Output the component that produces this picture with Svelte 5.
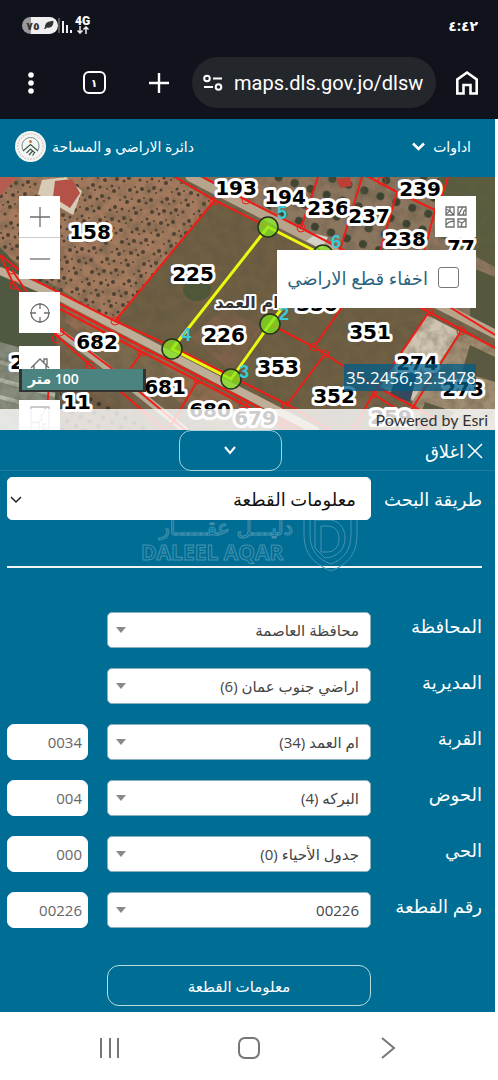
<script>
  let metodo = $state('parcel');
  let hideParcels = $state(false);

  const fields = [
    { id: 'governorate', label: 'المحافظة', value: 'محافظة العاصمة', code: null },
    { id: 'directorate', label: 'المديرية', value: 'اراضي جنوب عمان (6)', code: null },
    { id: 'village', label: 'القربة', value: 'ام العمد (34)', code: '0034' },
    { id: 'basin', label: 'الحوض', value: 'البركه (4)', code: '004' },
    { id: 'quarter', label: 'الحي', value: 'جدول الأحياء (0)', code: '000' },
    { id: 'parcel', label: 'رقم القطعة', value: '00226', code: '00226' }
  ];

  const parcels = [
    ['158', 90, 55], ['193', 236, 11], ['194', 285, 20], ['236', 328, 31],
    ['237', 369, 39], ['239', 420, 12], ['238', 405, 62], ['77', 461, 70],
    ['225', 193, 97], ['226', 224, 158], ['682', 97, 165], ['681', 165, 210],
    ['680', 210, 233], ['679', 255, 241], ['353', 278, 190], ['352', 334, 219],
    ['350', 317, 127], ['351', 370, 155], ['274', 417, 186], ['273', 463, 212],
    ['259', 391, 240], ['11', 77, 225], ['2', 17, 185]
  ];

  const corners = [[268, 50], [323, 78], [270, 147], [231, 202], [172, 172]];
  const cornerLabels = [['5', 282, 36], ['6', 336, 65], ['2', 284, 137], ['3', 244, 195], ['4', 186, 158]];

  const knots = [[214, 24], [115, 144], [12, 93], [14, 108], [56, 162], [90, 188], [142, 175], [198, 203], [301, 51],
    [314, 170], [325, 177], [286, 229], [429, 135], [461, 154], [373, 217], [382, 4], [246, 23], [60, 155], [243, 227]];

  // olive rows, slightly uneven so they don't read as a grid
  const trees = [];
  for (let r = 0; r < 28; r++) {
    for (let c = 0; c < 36; c++) {
      const x = -80 + c * 8 + r * 3 + ((r * 7 + c * 3) % 4);
      const y = r * 8 - 100 + c * 3 + ((r * 5 + c * 11) % 4);
      if (x > 0 && x < 214 && y > 0 && y < 146) {
        trees.push([x, y, 1 + ((r + c * 2) % 3) * 0.5]);
      }
    }
  }
</script>

<div class="phone">
  <div class="status">
    <div class="status-left">
      <span class="battery">٧٥
        <svg width="10" height="8" viewBox="0 0 10 8"><path d="M1 6C1 2 4 0 9.500 0 9.500 5 7 7.500 3 6.500L1 8H0Z" fill="#333" /></svg>
      </span>
      <svg width="17" height="17" viewBox="0 0 17 17" stroke="#eee" stroke-width="2">
        <path d="M1 1V16" stroke="#555" /><path d="M5 4V16M9 8V16M13 13V16" />
      </svg>
      <span class="net"><b>4G</b>
        <svg width="12" height="8" viewBox="0 0 12 8" fill="none" stroke="#eee" stroke-width="1.500"><path d="M3 0V7M0.500 4.500L3 7L5.500 4.500M9 8V1M6.500 3.500L9 1L11.500 3.500" /></svg>
      </span>
    </div>
    <time>٤:٤٢</time>
  </div>

  <div class="browser">
    <button aria-label="menu">
      <svg width="6" height="22" viewBox="0 0 6 22" fill="#fff"><circle cx="3" cy="3" r="2.800" /><circle cx="3" cy="11" r="2.800" /><circle cx="3" cy="19" r="2.800" /></svg>
    </button>
    <button aria-label="tabs"><span class="tab">١</span></button>
    <button aria-label="new tab">
      <svg width="22" height="22" viewBox="0 0 22 22" stroke="#fff" stroke-width="2.400"><path d="M11 1V21M1 11H21" /></svg>
    </button>
    <div class="url">
      <svg width="20" height="18" viewBox="0 0 20 18" fill="none" stroke="#fff" stroke-width="2"><circle cx="4" cy="4.500" r="2.800" /><path d="M10 4.500H19M1 13H10" /><circle cx="15.500" cy="13" r="2.800" /></svg>
      <span>maps.dls.gov.jo/dlsw</span>
    </div>
    <button aria-label="home">
      <svg width="24" height="26" viewBox="0 0 24 26" fill="none" stroke="#fff" stroke-width="2.600"><path d="M2.300 23.500V9.500L12 2.500L21.700 9.500V23.500H15.500V15H8.500V23.500Z" /></svg>
    </button>
  </div>

  <main class="site" dir="rtl">
    <header>
      <button class="tools">اداوات
        <svg width="13" height="9" viewBox="0 0 13 9" fill="none" stroke="#fff" stroke-width="2.600"><path d="M1 1.500L6.500 7L12 1.500" /></svg>
      </button>
      <div class="brand">
        <span>دائرة الاراضي و المساحة</span>
        <svg width="31" height="31" viewBox="0 0 31 31" fill="none">
          <circle cx="15.500" cy="15.500" r="15.500" fill="#f5f5f3" />
          <circle cx="15.500" cy="15.500" r="12.700" stroke="#d5d2c9" stroke-width="1.500" stroke-dasharray="2 1" />
          <path d="M8 19A8.500 8.500 0 1 1 23 19" stroke="#6f8c82" stroke-width="1" />
          <path d="M8 20L15.500 13.500L23 20M11.500 22L15.500 18L20 22M14 24L18 19.500M17.500 24.500L20 21" stroke="#39584d" stroke-width="1.200" />
          <circle cx="15.500" cy="10.500" r="1.500" fill="#c77a3b" />
        </svg>
      </div>
    </header>

    <section class="map" dir="ltr">
      <svg class="ground" viewBox="0 0 495 253" preserveAspectRatio="xMinYMin slice">
        <defs>
          <filter id="grain" x="0" y="0" width="100%" height="100%">
            <feTurbulence type="fractalNoise" baseFrequency="0.09" numOctaves="4" seed="8" />
            <feColorMatrix values="0 0 0 0 0.100  0 0 0 0 0.090  0 0 0 0 0.050  2.400 0 0 0 -0.900" />
          </filter>
          <clipPath id="orchard"><path d="M0 0H172L214 24L115 146L60 120L0 75Z" /></clipPath>
          <pattern id="rows" width="10" height="10" patternUnits="userSpaceOnUse" patternTransform="rotate(28)">
            <circle cx="4" cy="4" r="2.300" fill="#2e3323" />
          </pattern>
          <pattern id="bush" width="17" height="17" patternUnits="userSpaceOnUse" patternTransform="rotate(20)">
            <circle cx="7" cy="7" r="4" fill="#3a4330" />
          </pattern>
        </defs>
        <rect width="495" height="253" fill="#75634a" />
        <path d="M0 0H172L214 24L115 146L0 75Z" fill="#a47a5e" />
        <g clip-path="url(#orchard)" fill="#4b4032">
          {#each trees as [x, y, r]}
            <circle cx={x} cy={y} {r} />
          {/each}
        </g>
        <path d="M214 24L345 90L480 160L300 253L250 222L115 146Z" fill="#6f5f43" />
        <path d="M190 160L225 130L262 150L232 195Z" fill="#7d6149" />
        <path d="M203 0H495V160L300 55Z" fill="#8d7660" />
        <path d="M265 0H440L425 80L350 75L265 30Z" fill="url(#bush)" />
        <path d="M440 0H495V90L440 60Z" fill="#5c5e40" />
        <path d="M427 138L460 155L415 225L380 210Z" fill="#cfc4b1" />
        <path d="M460 155L495 170V253H400L415 220Z" fill="#a18d72" />
        <path d="M470 168L495 180V205L462 195ZM425 225L455 235L440 253H415Z" fill="#5b5a40" />
        <path d="M470 90L495 100V155L470 140Z" fill="#56583d" />
        <path d="M398 190L422 178L410 225L390 218Z" fill="#35485d" />
        <path d="M0 70L55 130L60 253H0Z" fill="#4f5942" />
        <path d="M0 165L55 180V253H0Z" fill="#858c7c" />
        <path d="M0 185L55 200M0 203L55 218M0 220L55 235" stroke="#b5baab" stroke-width="4" />
        <path d="M65 120L280 253H220L65 145Z" fill="#8f6d50" />
        <path d="M105 150L180 200L130 210L85 180Z" fill="#7c6a4d" />
        <path d="M60 195L150 253H60Z" fill="#765b46" />
        <path d="M60 195L150 253H60Z" fill="url(#rows)" />
        <ellipse cx="197" cy="112" rx="14" ry="12" fill="#4d5838" />
        <rect width="495" height="253" filter="url(#grain)" opacity="0.400" />

        <g fill="none" stroke-linecap="round">
          <path d="M190 0L330 72L495 157" stroke="#b6a48d" stroke-width="9" />
          <path d="M0 94L60 120L180 183L315 253" stroke="#bfae97" stroke-width="8" />
          <path d="M50 148L100 185L185 253" stroke="#b5aa96" stroke-width="7" />
        </g>
        <path d="M42 3L66 0L82 14L73 38L52 26L38 17Z" fill="#d7cbb5" />
        <path d="M55 4L72 2L80 16L70 31L53 20Z" fill="#b55248" />
        <path d="M0 0H18L0 19Z" fill="#b55c50" /><path d="M336 2L350 0L352 9L340 11Z" fill="#ba3f36" />
        <path d="M306 64L316 57L328 60L322 72Z" fill="#d5d2ca" />

        <g fill="none" stroke="#ef1d16" stroke-width="2">
          <path d="M175 0L214 23L268 50L429 135L495 171M203 0L246 23L301 51L430 118L495 158" />
          <path d="M214 24L115 144M318 0L301 51M362 0L340 73M397 15L380 75M365 -2L397 15L435 33M435 33L424 75M448 0L441 22" />
          <path d="M0 78L30 101L115 144L173 170L290 229L330 253M60 127L142 170L243 222L300 253M60 132L142 175L243 227L290 253" />
          <path d="M0 78L14 108L56 150L110 190L185 253M12 93L56 158L90 188L165 253M50 200L47 230" />
          <path d="M142 175L128 195M198 203L170 250M270 147L314 170L373 208L440 244M314 170L345 126M325 177L286 229" />
          <path d="M429 135L373 217L353 253M461 154L410 235M373 217L430 253" />
          {#each knots as [x, y]}
            <circle cx={x} cy={y} r="4" stroke-width="1" />
          {/each}
        </g>

        <polygon points={corners.map((p) => p.join(',')).join(' ')} fill="none" stroke="#e9f910" stroke-width="3" />
        {#each corners as [x, y]}
          <circle cx={x} cy={y} r="10" fill="#83e51d" fill-opacity="0.750" stroke="#25301b" stroke-width="1.500" />
        {/each}
        <g class="parcel-labels">
          {#each parcels as [name, x, y]}
            <text {x} y={y + 7}>{name}</text>
          {/each}
          <text class="town" x="247" y="131">ام العمد</text>
        </g>
        <g class="corner-labels">
          {#each cornerLabels as [name, x, y]}
            <text {x} y={y + 6}>{name}</text>
          {/each}
        </g>
      </svg>

      <div class="map-controls">
        <div class="zoom">
          <button aria-label="zoom in"><svg width="20" height="20" viewBox="0 0 20 20"><path d="M10 0V20M0 10H20" /></svg></button>
          <button aria-label="zoom out"><svg width="20" height="20" viewBox="0 0 20 20"><path d="M0 10H20" /></svg></button>
        </div>
        <button aria-label="locate"><svg width="20" height="20" viewBox="0 0 20 20"><circle cx="10" cy="10" r="9" /><path d="M10 0V6M10 14V20M0 10H6M14 10H20" /></svg></button>
        <button aria-label="default extent"><svg width="20" height="20" viewBox="0 0 20 20"><path d="M1 11L10 2L19 11M4 8V19H8V13H12V19H16V8M14 5V2H17V8" /></svg></button>
        <button class="faded" aria-label="overview"><svg width="20" height="30" viewBox="0 0 20 30"><path d="M1 1H19V29H1ZM16 1L13 8L11 9L12 14L5 17L1 16M9 16V24M17 18H13V23H17" /></svg></button>
      </div>

      <button class="basemap" aria-label="basemap gallery">
        <svg width="22" height="22" viewBox="0 0 22 22"><path d="M1 1H9V9H1ZM13 1H21V9H13ZM1 13H9V21H1ZM13 13H21V21H13ZM1 3L5 5L9 9M5 1V5L1 8M14 8L16 4L18 1M18 9L19 5L21 3M1 19L4 16L9 15M13 15L17 17L21 14M16 21L17 17" /></svg>
      </button>

      <label class="hide-parcels" dir="rtl">
        <input type="checkbox" bind:checked={hideParcels} />
        اخفاء قطع الاراضي
      </label>

      <div class="scale" dir="rtl">100 متر</div>
      <div class="coords">35.2456,32.5478</div>
      <div class="credit">Powered by Esri</div>
    </section>

    <section class="panel">
      <div class="panel-top">
        <button class="close">
          <svg width="16" height="16" viewBox="0 0 16 16" stroke="#fff" stroke-width="1.500"><path d="M1 1L15 15M15 1L1 15" /></svg>اغلاق
        </button>
        <button class="collapse" aria-label="collapse">
          <svg width="12" height="9" viewBox="0 0 12 9" fill="none" stroke="#fff" stroke-width="2"><path d="M1 1L6 7L11 1" /></svg>
        </button>
      </div>

      <div class="method">
        <label for="method">طريقة البحث</label>
        <div class="select">
          <select id="method" bind:value={metodo}>
            <option value="parcel">معلومات القطعة</option>
          </select>
          <svg width="12" height="8" viewBox="0 0 12 8" fill="none" stroke="#222" stroke-width="1.500"><path d="M1 1L6 6L11 1" /></svg>
        </div>
        <svg class="watermark" width="218" height="58" viewBox="0 0 218 58" fill="none">
          <text class="wm-ar" x="152" y="21">دليـــل عقـــــار</text>
          <text class="wm-en" x="0" y="46">DALEEL AQAR</text>
          <path d="M163 2V20C163 40 173 50 190 57C207 50 216 40 216 20V2M169 5V20C169 36 176 45 190 50C203 45 210 36 210 20V5M174 6H188C198 6 204 14 204 24C204 36 196 43 184 44L174 34ZM180 12V38H186C194 38 198 32 198 25C198 17 194 12 186 12Z" />
        </svg>
      </div>

      <form onsubmit={(e) => e.preventDefault()}>
        {#each fields as field}
          <div class="field">
            <label for={field.id}>{field.label}</label>
            <div class="select">
              <select id={field.id}>
                <option>{field.value}</option>
              </select>
              <svg width="10" height="6" viewBox="0 0 10 6"><path d="M0 0H10L5 6Z" fill="#888" /></svg>
            </div>
            {#if field.code}
              <input type="text" value={field.code} aria-label={field.label} />
            {/if}
          </div>
        {/each}
        <div class="field last">
          <button class="submit">معلومات القطعة</button>
        </div>
      </form>
    </section>
  </main>

  <nav>
    <button aria-label="recent"><svg width="20" height="20" viewBox="0 0 20 20"><path d="M1 0V20M10 0V20M18 0V20" /></svg></button>
    <button aria-label="home screen"><svg width="22" height="22" viewBox="0 0 22 22"><rect x="1" y="1" width="20" height="20" rx="6" /></svg></button>
    <button aria-label="back"><svg width="14" height="22" viewBox="0 0 14 22"><path d="M1 1L13 11L1 21" /></svg></button>
  </nav>
</div>

<style>
  :global(body) {
    margin: 0;
    background: #fff;
  }

  .phone {
    font-family: 'Open Sans', 'DejaVu Sans', sans-serif;
    color: #fff;
  }

  svg {
    display: block;
    flex: none;
  }

  button {
    display: flex;
    align-items: center;
    justify-content: center;
    padding: 0;
    border: 0;
    background: none;
    color: inherit;
    font: inherit;
  }

  .status {
    display: flex;
    justify-content: space-between;
    align-items: center;
    height: 50px;
    padding: 0 20px 0 22px;
    background: #10131b;
    font-size: 14px;
    font-weight: 700;
  }

  .status-left {
    display: flex;
    align-items: center;
  }

  .battery {
    display: flex;
    align-items: center;
    justify-content: center;
    gap: 4px;
    width: 36px;
    height: 17px;
    border-radius: 9px;
    background: linear-gradient(90deg, #99999b 25%, #efeff1 25%);
    color: #333;
    font-size: 11px;
  }

  .net {
    display: flex;
    flex-direction: column;
    align-items: center;
    font-family: Roboto, sans-serif;
    font-size: 12px;
    line-height: 10px;
  }

  .browser {
    display: grid;
    grid-template-columns: 62px 64px 66px 1fr 62px;
    align-items: center;
    height: 69px;
    padding-bottom: 4px;
    box-sizing: border-box;
    background: #10131b;
  }

  .tab {
    width: 19px;
    height: 19px;
    border: 2px solid #fff;
    border-radius: 6px;
    font-size: 11px;
    font-weight: 700;
    line-height: 19px;
  }

  .url {
    display: flex;
    align-items: center;
    gap: 11px;
    height: 51px;
    padding-left: 11px;
    border-radius: 26px;
    background: #23262b;
    font-family: Roboto, sans-serif;
    font-size: 20px;
    white-space: nowrap;
    overflow: hidden;
  }

  .site {
    margin-right: 3px;
    background: #006d94;
  }

  header {
    display: flex;
    justify-content: space-between;
    align-items: center;
    height: 58px;
    padding: 0 24px 3px 15px;
    box-sizing: border-box;
    font-size: 14px;
  }

  .tools {
    gap: 8px;
  }

  .brand {
    display: flex;
    align-items: center;
    gap: 6px;
  }

  .map {
    position: relative;
    height: 253px;
    overflow: hidden;
  }

  .ground {
    width: 100%;
    height: 100%;
  }

  .parcel-labels text {
    font: 700 20px 'DejaVu Sans', sans-serif;
    text-anchor: middle;
    fill: #000;
    stroke: #fff;
    stroke-width: 6px;
    stroke-linejoin: round;
    paint-order: stroke;
  }

  .parcel-labels .town {
    font-size: 16px;
    fill: #333;
    stroke-width: 4px;
  }

  .corner-labels text {
    font: 700 18px 'Liberation Sans', sans-serif;
    text-anchor: middle;
    fill: #38cbd8;
  }

  .map-controls {
    position: absolute;
    top: 19px;
    left: 19px;
    display: flex;
    flex-direction: column;
    gap: 13px;
  }

  .zoom {
    display: flex;
    flex-direction: column;
    gap: 1px;
    background: #ccc;
  }

  .map button {
    width: 41px;
    height: 41px;
    background: #fff;
  }

  .map button svg {
    fill: none;
    stroke: #6e6e6e;
    stroke-width: 1.3px;
  }

  .map .faded svg {
    stroke: #bbb;
  }

  .basemap {
    position: absolute;
    top: 19px;
    right: 19px;
  }

  .hide-parcels {
    position: absolute;
    top: 73px;
    right: 19px;
    display: flex;
    align-items: center;
    gap: 10px;
    width: 199px;
    height: 58px;
    padding: 0 17px 3px 0;
    box-sizing: border-box;
    background: #fff;
    color: #2b6480;
    font-size: 18px;
    white-space: nowrap;
  }

  .hide-parcels input {
    appearance: none;
    width: 21px;
    height: 21px;
    margin: 0;
    border: 1px solid #777;
    border-radius: 3px;
    flex: none;
  }

  .scale {
    position: absolute;
    left: 19px;
    bottom: 38px;
    width: 127px;
    height: 23px;
    padding-left: 6px;
    box-sizing: border-box;
    border: solid #333;
    border-width: 0 3px 2px;
    background: #4a8380;
    font-size: 14px;
    font-weight: 600;
    line-height: 20px;
    text-align: left;
  }

  .coords {
    position: absolute;
    right: 19px;
    bottom: 39px;
    height: 27px;
    padding-left: 2px;
    background: rgba(0, 94, 136, 0.75);
    font-size: 17px;
    line-height: 27px;
  }

  .credit {
    position: absolute;
    left: 0;
    right: 0;
    bottom: 0;
    height: 21px;
    padding-right: 7px;
    background: rgba(255, 255, 255, 0.8);
    color: #323232;
    font-family: Lato, sans-serif;
    font-size: 16px;
    line-height: 21px;
    text-align: right;
  }

  .panel {
    padding: 0 13px 6px 7px;
  }

  .panel-top {
    display: grid;
    grid-template-columns: 1fr 103px 1fr;
    height: 41px;
    margin: 0 -13px 6px -42px;
    border-bottom: 1px solid #1c7b9f;
    box-sizing: border-box;
  }

  .panel-top .close {
    justify-content: flex-start;
    gap: 3px;
    padding-right: 12px;
    font-size: 18px;
  }

  .collapse {
    height: 41px;
    border: 1px solid #a9d3d6;
    border-radius: 12px;
  }

  .method {
    position: relative;
    display: grid;
    grid-template-columns: 92px 1fr;
    gap: 19px;
    align-items: center;
    padding-bottom: 46px;
    border-bottom: 2px solid #f1f5f6;
  }

  label {
    font-size: 18px;
    line-height: 28px;
    white-space: nowrap;
  }

  .select {
    position: relative;
    z-index: 1;
  }

  .select svg {
    position: absolute;
    left: 9px;
    top: 50%;
    margin-top: -3px;
    pointer-events: none;
  }

  select,
  input[type='text'] {
    appearance: none;
    display: block;
    width: 100%;
    height: 36px;
    margin: 0;
    padding: 0 11px;
    box-sizing: border-box;
    border: 1px solid #8db1bd;
    border-radius: 5px;
    background: #fff;
    color: #444;
    font: inherit;
    font-size: 15px;
  }

  .method select {
    height: 43px;
    padding: 0 14px;
    border-color: #fff;
    color: #111;
    font-size: 18px;
  }

  .method .select svg {
    left: 3px;
  }

  .watermark {
    position: absolute;
    left: 134px;
    bottom: -6px;
    direction: ltr;
    stroke: #4593b0;
  }

  .wm-ar {
    direction: rtl;
    font: 400 21px 'DejaVu Sans', sans-serif;
  }

  .wm-en {
    font: 700 21px 'Open Sans', sans-serif;
  }

  form {
    display: flex;
    flex-direction: column;
    gap: 20px;
    padding-top: 44px;
  }

  .field {
    display: grid;
    grid-template-columns: 92px 1fr 81px;
    gap: 19px;
    align-items: start;
  }

  .field input[type='text'] {
    padding: 0 5px;
    border-color: #fff;
    border-radius: 7px;
    color: #666;
  }

  .field.last {
    padding-top: 17px;
  }

  .submit {
    grid-column: 2;
    height: 41px;
    border: 1px solid #b7dcdc;
    border-radius: 12px;
    font-size: 15px;
  }

  nav {
    display: grid;
    grid-template-columns: repeat(3, 139px);
    justify-content: center;
    align-items: center;
    height: 68px;
    padding-top: 4px;
    box-sizing: border-box;
  }

  nav svg {
    fill: none;
    stroke: #777;
    stroke-width: 2px;
  }
</style>
